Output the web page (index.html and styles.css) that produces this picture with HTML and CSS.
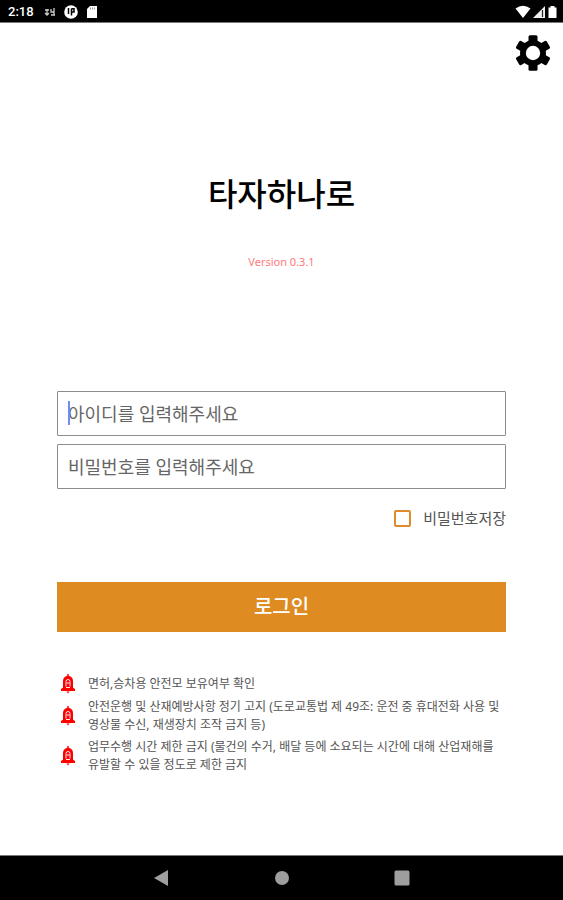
FILE: index.html
```html
<!DOCTYPE html>
<html lang="ko">

<head>
  <meta charset="UTF-8">
  <meta name="viewport" content="width=device-width, initial-scale=1.0">
  <title>타자하나로</title>
  <link rel="stylesheet" href="styles.css">
</head>
<body>
  <!-- Status bar -->
  <div class="statusbar">
    <div class="status-left">
      <span class="clock">2:18</span>
      <svg width="12" height="12" viewBox="0 0 12 12" fill="none" stroke="#ccc" stroke-width="1.3">
        <path d="M3 3v6M1 7l2 2 2-2M1 4h4M7 3v3h3M7 9h4M10 2v7"/>
      </svg>
      <svg width="14" height="14" viewBox="0 0 14 14">
        <circle cx="7" cy="7" r="6.8" fill="#fff"/>
        <path d="M4.500 3v6M7.500 3.500v7M7.500 3.700h2.500v3.300H7.500" fill="none" stroke="#000" stroke-width="1.500"/>
      </svg>
      <svg width="12" height="14" viewBox="0 0 12 14">
        <path d="M4 1h7v12H1V4z" fill="#fff"/>
        <path d="M4.500 2.500v2M6.500 2.500v2M8.500 2.500v2" stroke="#999" stroke-width="1"/>
      </svg>
    </div>
    <div class="status-right">
      <svg width="16" height="14" viewBox="0 0 16 14">
        <path d="M0.500 3.500Q8-2 15.500 3.500L8 13z" fill="#fff"/>
      </svg>
      <svg width="13" height="14" viewBox="0 0 13 14">
        <path d="M0 13L12 1v12z" fill="#eee"/>
        <path d="M9.500 5v7" stroke="#222" stroke-width="1.200"/>
      </svg>
      <svg width="9" height="14" viewBox="0 0 9 14">
        <path d="M0.500 2.500h2V1h4v1.500h2V13h-8z" fill="#fff"/>
      </svg>
    </div>
  </div>

  <div class="toolbar">
    <button type="button" class="settings" aria-label="설정">
      <svg width="42" height="42" viewBox="-21 -21 42 42">
        <rect id="tooth" x="-4.500" y="-17.700" width="9" height="35.400" rx="1.500"/>
        <use href="#tooth" transform="rotate(60)"/>
        <use href="#tooth" transform="rotate(120)"/>
        <circle r="13"/>
        <circle r="7.200" fill="#fff"/>
      </svg>
    </button>
  </div>

  <div class="content">
    <h1>타자하나로</h1>
    <p class="version">Version 0.3.1</p>

    <form id="loginForm">
      <div class="field">
        <input type="text" id="userId" name="userId" placeholder="아이디를 입력해주세요" aria-label="아이디">
        <span class="caret"></span>
      </div>
      <div class="field">
        <input type="password" id="userPw" name="userPw" placeholder="비밀번호를 입력해주세요" aria-label="비밀번호">
      </div>
      <div class="save">
        <input type="checkbox" id="savePw" name="savePw">
        <label for="savePw">비밀번호저장</label>
      </div>
      <button type="submit" class="login">로그인</button>
    </form>

    <!-- Siren icon shared by the notices -->
    <svg class="defs" width="0" height="0">
      <symbol id="siren" viewBox="0 0 16 20">
        <path d="M7.300 0h1.400v1.700c3 .5 4.300 2.800 4.300 5.300v6.500l2 1.500v2H1v-2l2-1.500V7c0-2.500 1.300-4.800 4.300-5.300z" fill="#f00"/>
        <path d="M6.500 17.500h3L8 19.500z" fill="#f00"/>
        <path d="M6 12.500V7.500q0-2 2-2t2 2v5M6.500 9h3M6 13.500h4" fill="none" stroke="#fff" stroke-width="0.900"/>
      </symbol>
    </svg>

    <ul class="notices">
      <li>
        <svg width="16" height="20"><use href="#siren"/></svg>
        <span>면허,승차용 안전모 보유여부 확인</span>
      </li>
      <li>
        <svg width="16" height="20"><use href="#siren"/></svg>
        <span>안전운행 및 산재예방사항 정기 고지 (도로교통법 제 49조: 운전 중 휴대전화 사용 및<br>영상물 수신, 재생장치 조작 금지 등)</span>
      </li>
      <li>
        <svg width="16" height="20"><use href="#siren"/></svg>
        <span>업무수행 시간 제한 금지 (물건의 수거, 배달 등에 소요되는 시간에 대해 산업재해를<br>유발할 수 있을 정도로 제한 금지</span>
      </li>
    </ul>
  </div>

  <!-- Navigation bar -->
  <div class="navbar">
    <button type="button" aria-label="뒤로">
      <svg width="16" height="16" viewBox="0 0 16 16"><path d="M0 8L14 0v16z" fill="#9e9e9e"/></svg>
    </button>
    <button type="button" aria-label="홈">
      <svg width="16" height="16" viewBox="0 0 16 16"><circle cx="8" cy="8" r="7" fill="#9e9e9e"/></svg>
    </button>
    <button type="button" aria-label="최근 앱">
      <svg width="16" height="16" viewBox="0 0 16 16"><rect x="0.500" y="0.500" width="15" height="15" rx="1.500" fill="#9e9e9e"/></svg>
    </button>
  </div>
</body>
</html>
```

FILE: styles.css
```css
* {
  box-sizing: border-box;
}

body {
  font-family: "Noto Sans", "Noto Sans CJK KR", sans-serif;
  margin: 0;
  display: flex;
  flex-direction: column;
  min-height: 100vh;
  background-color: #fff;
}

svg {
  display: block;
}

button {
  border: none;
  padding: 0;
  background: none;
  font-family: inherit;
  cursor: pointer;
}

.statusbar {
  display: flex;
  justify-content: space-between;
  align-items: center;
  height: 23px;
  padding: 1px 6px 0 8px;
  background-color: #000;
  border-bottom: 1px solid #777;
  color: #fff;
}

.status-left,
.status-right {
  display: flex;
  align-items: center;
}

.status-left {
  gap: 8px;
}

.status-right {
  gap: 2px;
}

.clock {
  font-family: Roboto, sans-serif;
  font-size: 13px;
  font-weight: 500;
  margin-right: 2px;
}

.toolbar {
  display: flex;
  justify-content: flex-end;
  padding: 9px;
}

.content {
  flex: 1;
  padding: 0 57px;
}

h1 {
  margin: 87px 0 0;
  font-size: 32px;
  line-height: 48px;
  font-weight: 500;
  text-align: center;
  color: #000;
}

.version {
  margin: 34px 0 0;
  font-size: 11px;
  line-height: 20px;
  text-align: center;
  color: #ff7a7a;
}

form {
  margin-top: 119px;
}

.field {
  position: relative;
  margin-bottom: 8px;
}

.field input {
  display: block;
  width: 100%;
  height: 45px;
  padding: 0 10px;
  border: 1px solid #8c8c8c;
  border-radius: 1px;
  font-family: inherit;
  font-size: 18px;
  color: #000;
}

.field input::placeholder {
  color: #666;
}

/* text cursor of the active field */
.caret {
  position: absolute;
  left: 11px;
  top: 10px;
  width: 2px;
  height: 24px;
  background-color: #6f8cf0;
}

.save {
  display: flex;
  justify-content: flex-end;
  align-items: center;
  gap: 12px;
  margin-top: 17px;
}

.save input {
  appearance: none;
  width: 17px;
  height: 17px;
  margin: 0;
  border: 2px solid #e08a2e;
  border-radius: 2px;
}

.save input:checked {
  background-color: #de8c22;
}

.save label {
  font-size: 15px;
  line-height: 24px;
  color: #555;
}

.login {
  display: block;
  width: 100%;
  height: 50px;
  margin-top: 52px;
  padding-bottom: 3px;
  background-color: #de8c22;
  font-size: 20px;
  font-weight: 500;
  color: #fff;
}

.login:hover {
  background-color: #c97c18;
}

.defs {
  position: absolute;
}

.notices {
  list-style: none;
  margin: 42px 0 0;
  padding: 0;
}

.notices li {
  display: flex;
  align-items: center;
  gap: 12px;
  margin-bottom: 4px;
  padding-left: 3px;
  font-size: 12px;
  line-height: 18px;
  color: #555;
}

.navbar {
  display: flex;
  justify-content: center;
  align-items: center;
  gap: 104px;
  height: 45px;
  background-color: #000;
  border-top: 1px solid #777;
}
```
